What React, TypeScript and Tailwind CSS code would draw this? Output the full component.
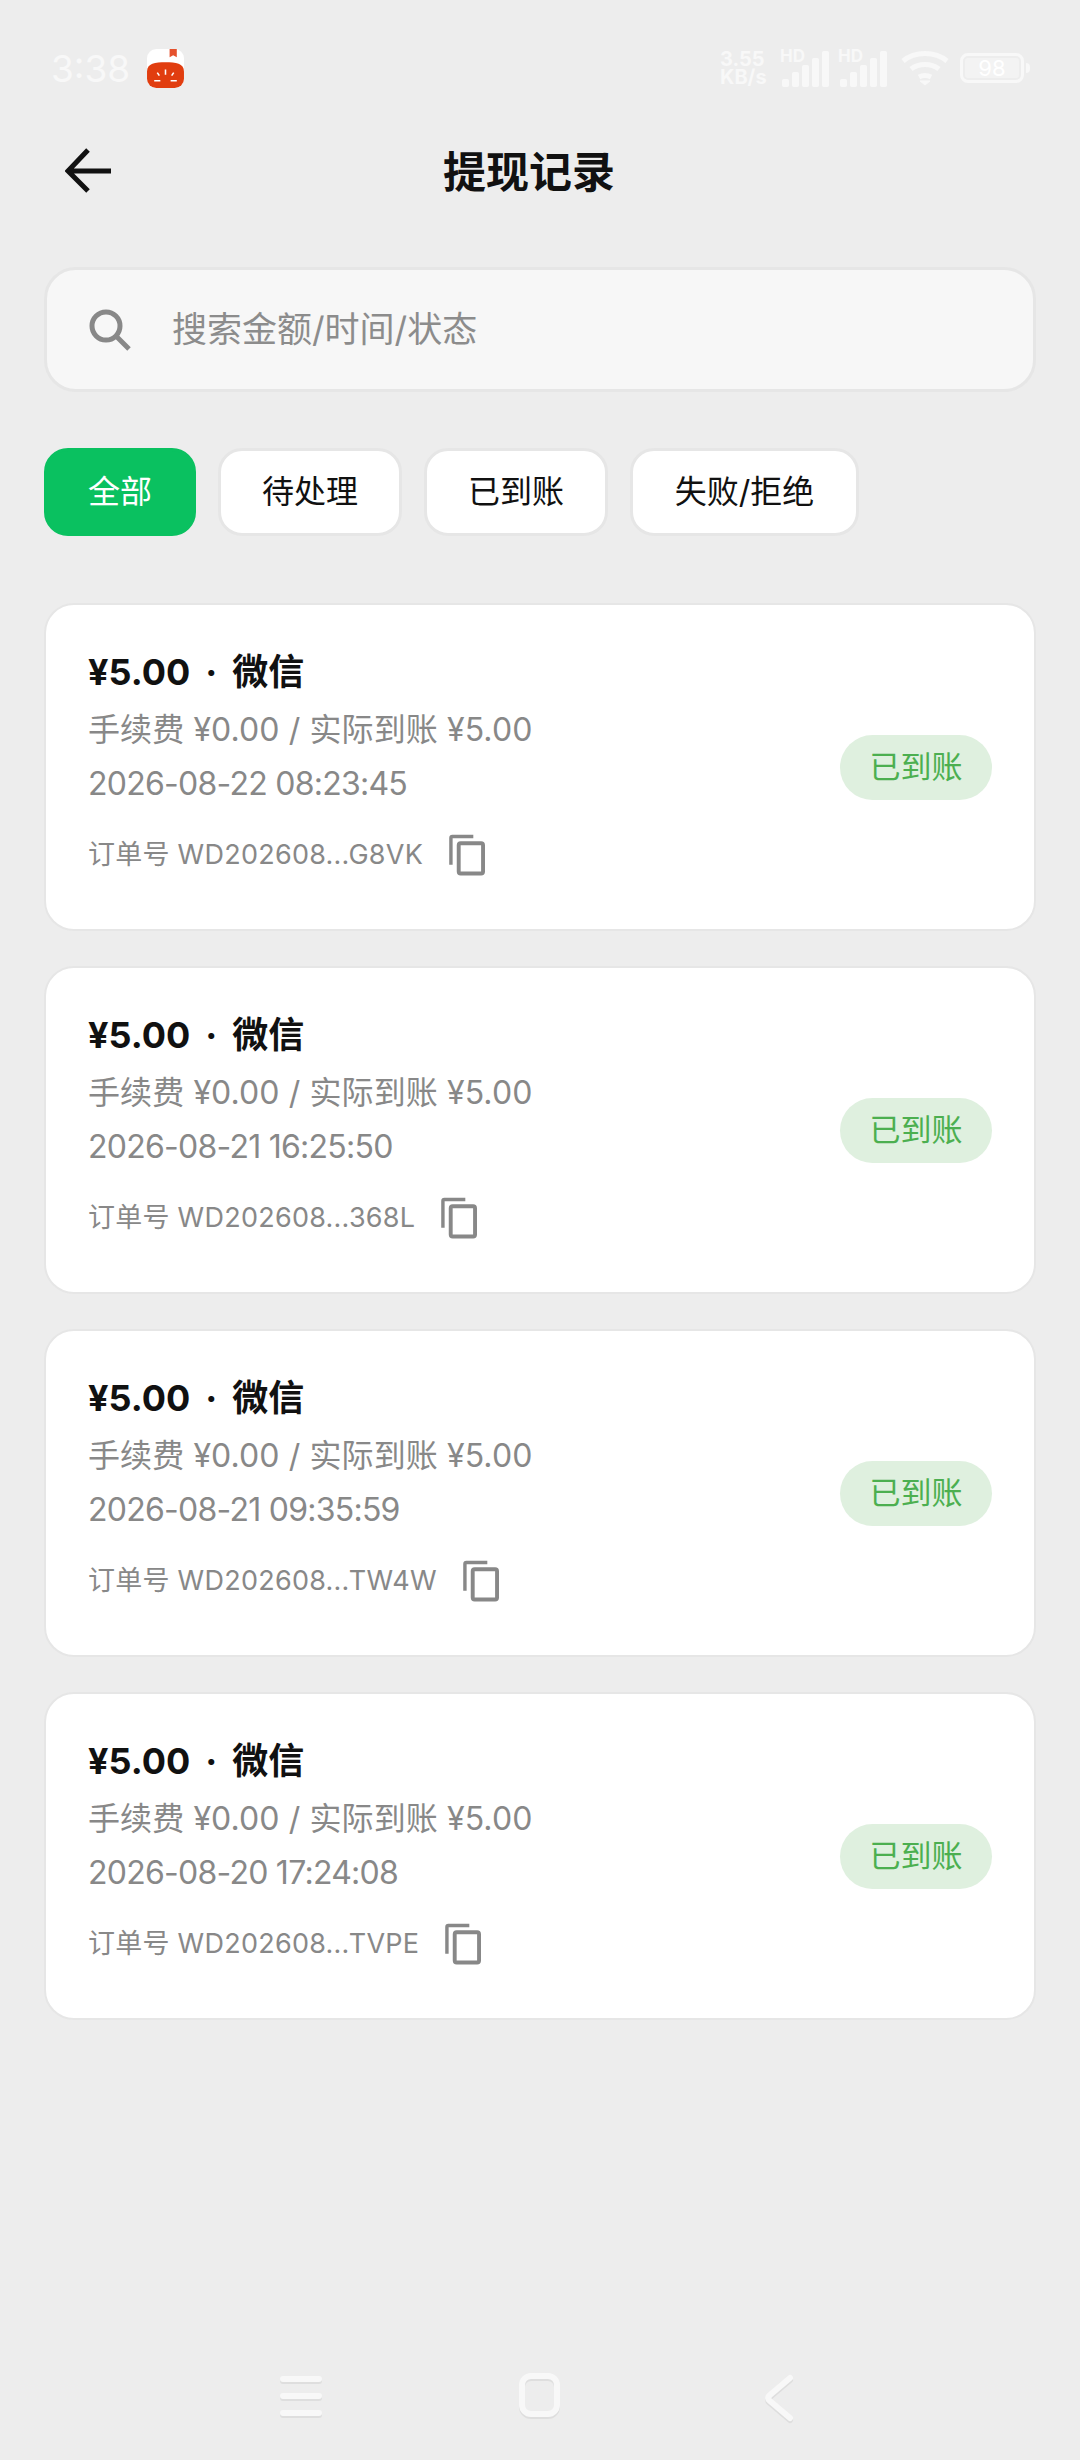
const CJK = "font-['Inter','Noto_Sans_CJK_SC',sans-serif]";

function Copy() {
  return (
    <svg width="37" height="42" viewBox="0 0 38 42" fill="none" stroke="#888888" className="shrink-0">
      <path d="M3 31V3.500a1.500 1.500 0 0 1 1.500-1.500H26" strokeWidth="3.500" />
      <rect x="11" y="9" width="25" height="31" rx="2" strokeWidth="4" />
    </svg>
  );
}

function Card({ time, order }: { time: string; order: string }) {
  return (
    <div className="h-[328px] rounded-[30px] border-[2px] border-[#e6e6e6] bg-white pl-[42px] pr-[42px] pt-[41px] flex items-start justify-between">
      <div className="flex flex-col">
        <div className="h-[52px] flex items-center text-[36px] font-bold text-[#111111]">
          <span>¥5.00</span>
          <span className="mx-[15px]">·</span>
          <span>微信</span>
        </div>
        <div className="mt-[5px] h-[54px] flex items-center text-[32px] tracking-[0.1px] text-[#888888]">手续费 ¥0.00 / 实际到账 ¥5.00</div>
        <div className="h-[54px] flex items-center text-[32px] tracking-[-0.75px] text-[#888888]">{time}</div>
        <div className="mt-[19px] h-[50px] flex items-center text-[27px] tracking-[0.25px] text-[#888888] gap-[25px]">
          <span>订单号 {order}</span>
          <Copy />
        </div>
      </div>
      <div className="mt-[89px] w-[152px] h-[65px] rounded-full bg-[#dff0df] text-[#4caf50] text-[31px] flex items-center justify-center">已到账</div>
    </div>
  );
}

function Chip({ label, active, w }: { label: string; active?: boolean; w: string }) {
  return (
    <div className={`h-[88px] rounded-[24px] flex items-center justify-center text-[32px] border-[3px] ${w} ${active ? "bg-[#0ac160] border-[#0ac160] text-white" : "bg-white border-[#e6e6e6] text-[#111111]"}`}>
      {label}
    </div>
  );
}

function Bars({ className }: { className: string }) {
  return (
    <div className={`relative w-[50px] h-[40px] ${className}`}>
      <span className="absolute left-0 top-[1px] text-[17px] leading-[15px] font-bold text-[#f8f8f8]">HD</span>
      <svg width="50" height="40" viewBox="0 0 50 40" className="absolute inset-0" fill="#f8f8f8">
        <rect x="2" y="31" width="7" height="8" rx="2" />
        <rect x="12" y="24" width="7" height="15" rx="2" />
        <rect x="22" y="17" width="7" height="22" rx="2" />
        <rect x="32" y="10" width="7" height="29" rx="2" />
        <rect x="42" y="3" width="7" height="36" rx="2" />
      </svg>
    </div>
  );
}

export default function App() {
  return (
    <div className={`w-[1080px] h-[2460px] bg-[#ededed] flex flex-col ${CJK}`}>
      {/* status bar */}
      <div className="h-[130px] shrink-0 pl-[51px] pr-[50px] pt-[46px] flex justify-between items-start">
        <div className="flex items-center h-[44px] gap-[17px]">
          <span className="text-[37px] leading-none text-[#f8f8f8]">3:38</span>
          <svg width="37" height="39" viewBox="0 0 36 38" className="shrink-0">
            <rect width="36" height="38" rx="9" fill="#ffffff" />
            <path d="M22 0h7v8l-3.500-2L22 8z" fill="#e5512d" />
            <path d="M0 22c0-8 8-9 18-9s18 1 18 9v7a9 9 0 0 1-9 9H9a9 9 0 0 1-9-9z" fill="#e13d0f" />
            <path d="M18 20v5M10 23l2 3M26 23l-2 3M7 31h6M23 31h6" stroke="#fff" strokeWidth="1.500" />
          </svg>
        </div>
        <div className="flex items-center h-[44px] text-[#f8f8f8]">
          <div className="font-bold text-[20px] leading-[18px] text-left w-[50px]">3.55<br />KB/s</div>
          <Bars className="ml-[10px]" />
          <Bars className="ml-[8px]" />
          <svg width="50" height="36" viewBox="0 0 50 36" fill="none" stroke="#f8f8f8" strokeWidth="5" className="ml-[12px]">
            <path d="M3 11c12-10 32-10 44 0" />
            <path d="M11 19c8-6 20-6 28 0" />
            <path d="M19 27c4-2 8-2 12 0" />
            <path d="M25 35l-5-4h10z" fill="#f8f8f8" strokeWidth="1" />
          </svg>
          <div className="flex items-center ml-[10px]">
            <div className="w-[64px] h-[30px] rounded-[8px] border-[3px] border-[#f8f8f8] p-[2px] flex">
              <div className="flex-1 rounded-[3px] bg-[#f3f3f3] flex items-center justify-center text-[22px] leading-none text-white">98</div>
            </div>
            <div className="ml-[2px] w-[4px] h-[10px] rounded-r-full bg-[#f8f8f8]" />
          </div>
        </div>
      </div>

      {/* header */}
      <div className="relative h-[84px] shrink-0 flex items-center justify-center">
        <svg width="46" height="46" viewBox="0 0 46 46" fill="none" stroke="#111111" strokeWidth="5" className="absolute left-[65px] top-[18px]">
          <path d="M2 24h44M23 3L3 24l20 20" transform="translate(0 -1)" />
        </svg>
        <span className="text-[43px] font-bold text-[#111111] relative left-[-11px]">提现记录</span>
      </div>

      <div className="px-[44px] pt-[53px] flex flex-col">
        {/* search */}
        <div className="h-[125px] w-[992px] rounded-[32px] border-[3px] border-[#e6e6e6] bg-[#f7f7f7] flex items-center pl-[42px] gap-[41px]">
          <svg width="42" height="42" viewBox="0 0 42 42" fill="none" stroke="#888888" strokeWidth="5">
            <circle cx="17" cy="17" r="14" />
            <path d="M27 27l13 13" />
          </svg>
          <span className="text-[35px] text-[#8c8c8c]">搜索金额/时间/状态</span>
        </div>

        {/* chips */}
        <div className="mt-[56px] flex gap-[22px]">
          <Chip label="全部" active w="w-[152px]" />
          <Chip label="待处理" w="w-[184px]" />
          <Chip label="已到账" w="w-[184px]" />
          <Chip label="失败/拒绝" w="w-[229px]" />
        </div>

        {/* cards */}
        <div className="mt-[67px] w-[992px] flex flex-col gap-[35px]">
          <Card time="2026-08-22 08:23:45" order="WD202608...G8VK" />
          <Card time="2026-08-21 16:25:50" order="WD202608...368L" />
          <Card time="2026-08-21 09:35:59" order="WD202608...TW4W" />
          <Card time="2026-08-20 17:24:08" order="WD202608...TVPE" />
        </div>
      </div>

      {/* nav */}
      <div className="mt-auto h-[110px] relative shrink-0">
        <svg width="600" height="110" viewBox="0 0 600 110" fill="none" strokeLinecap="round" className="absolute left-[240px] top-0">
          <g stroke="#dedede" strokeWidth="6" transform="translate(0 2)">
            <path d="M43 29h36M43 46h36M43 63h36" />
            <rect x="282" y="26" width="35" height="38" rx="9" />
            <path d="M550 28l-20 17q-4 3 0 6l20 17" />
          </g>
          <g stroke="#f8f8f8" strokeWidth="6">
            <path d="M43 29h36M43 46h36M43 63h36" />
            <rect x="282" y="26" width="35" height="38" rx="9" />
            <path d="M550 28l-20 17q-4 3 0 6l20 17" />
          </g>
        </svg>
      </div>
    </div>
  );
}
